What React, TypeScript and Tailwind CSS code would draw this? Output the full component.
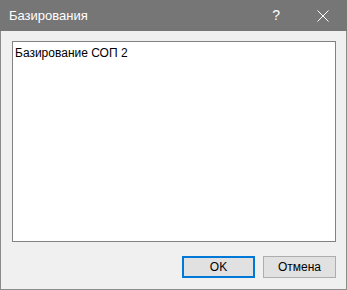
export default function App() {
  return (
    <div
      className="flex h-[290px] w-[347px] flex-col border border-t-0 border-[#8c8c8c] bg-[#f0f0f0] text-black"
      style={{ fontFamily: '"Liberation Sans", Arial, sans-serif' }}
    >
      <div className="-mx-px flex h-[31px] shrink-0 items-center bg-[#767676] pl-[9px] text-white">
        <span className="text-[13px]">Базирования</span>
        <span className="ml-auto mr-[37px] text-[14px]">?</span>
        <svg width="12" height="12" viewBox="0 0 12 12" className="mr-[18px]">
          <path d="M0.5 0.5 L11.5 11.5 M11.5 0.5 L0.5 11.5" stroke="white" strokeWidth="1" />
        </svg>
      </div>

      <div className="flex flex-1 flex-col pl-[11px] pr-[10px] pt-[10px]">
        <div className="h-[201px] border border-[#828282] bg-white px-[2px] pt-[4px] text-[12px] leading-[14px]">
          Базирование СОП 2
        </div>
        <div className="mt-[14px] flex justify-end gap-[8px]">
          <button className="h-[22px] w-[73px] border-2 border-[#0078d7] bg-[#e1e1e1] text-[12px]">
            OK
          </button>
          <button className="h-[22px] w-[73px] border border-[#adadad] bg-[#e1e1e1] text-[12px]">
            Отмена
          </button>
        </div>
      </div>
    </div>
  );
}
